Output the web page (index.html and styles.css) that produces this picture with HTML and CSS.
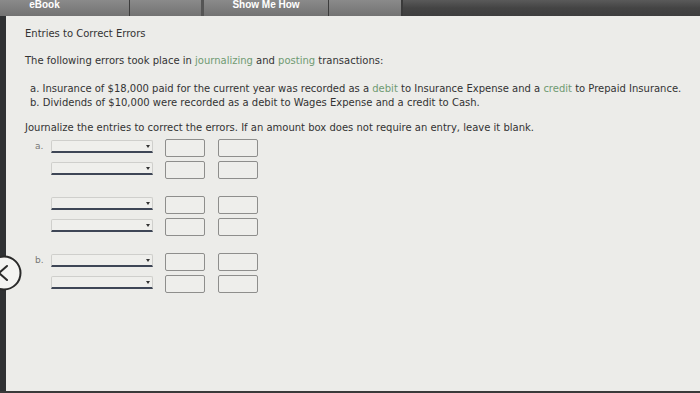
FILE: index.html
```html
<!DOCTYPE html>
<html>
<head>
<meta charset="utf-8">
<link rel="stylesheet" href="styles.css">
</head>
<body>
<div class="screen">
  <div class="topbar">
    <div class="tab tab-ebook">eBook</div>
    <div class="tab tab-blank1"></div>
    <div class="tab tab-show">Show Me How</div>
    <div class="tab tab-blank2"></div>
    <div class="darkbar"></div>
  </div>
  <div class="main">
    <div class="edge"></div>
    <div class="content">
      <div class="title">Entries to Correct Errors</div>
      <p class="intro">The following errors took place in <span class="link">journalizing</span> and <span class="link">posting</span> transactions:</p>
      <div class="items">
        <div>a. Insurance of $18,000 paid for the current year was recorded as a <span class="link">debit</span> to Insurance Expense and a <span class="link">credit</span> to Prepaid Insurance.</div>
        <div>b. Dividends of $10,000 were recorded as a debit to Wages Expense and a credit to Cash.</div>
      </div>
      <p class="instr">Journalize the entries to correct the errors. If an amount box does not require an entry, leave it blank.</p>
      <div class="journal">
        <div class="group">
          <div class="row"><span class="lbl">a.</span><span class="dd"><span class="arrow"></span></span><span class="box"></span><span class="box"></span></div>
          <div class="row"><span class="lbl"></span><span class="dd"><span class="arrow"></span></span><span class="box"></span><span class="box"></span></div>
        </div>
        <div class="group">
          <div class="row"><span class="lbl"></span><span class="dd"><span class="arrow"></span></span><span class="box"></span><span class="box"></span></div>
          <div class="row"><span class="lbl"></span><span class="dd"><span class="arrow"></span></span><span class="box"></span><span class="box"></span></div>
        </div>
        <div class="group">
          <div class="row"><span class="lbl">b.</span><span class="dd"><span class="arrow"></span></span><span class="box"></span><span class="box"></span></div>
          <div class="row"><span class="lbl"></span><span class="dd"><span class="arrow"></span></span><span class="box"></span><span class="box"></span></div>
        </div>
      </div>
    </div>
  </div>
  <div class="bottomline"></div>
  <div class="backbtn">
    <svg width="36" height="36" viewBox="0 0 36 36"><circle cx="18" cy="18" r="16.5" fill="#f4f4f2" stroke="#2a2a2a" stroke-width="2"/><path d="M21 11 L13 18 L21 25" fill="none" stroke="#2a2a2a" stroke-width="2" stroke-linecap="round" stroke-linejoin="round"/></svg>
  </div>
</div>
</body>
</html>
```
FILE: styles.css
```css
html, body {
  margin: 0;
  padding: 0;
}
body {
  background: #ebebe8;
  font-family: "DejaVu Sans", Verdana, sans-serif;
  color: #333;
}
.screen {
  position: relative;
  width: 700px;
  height: 393px;
  overflow: hidden;
  display: flex;
  flex-direction: column;
}
.topbar {
  display: flex;
  height: 16px;
  background: #4a4a4a;
  flex: none;
}
.tab {
  background: linear-gradient(#8a8a8a, #727272);
  color: #fff;
  font-family: "Liberation Sans", Arial, sans-serif;
  font-weight: bold;
  font-size: 10px;
  display: flex;
  justify-content: center;
  align-items: flex-start;
  line-height: 10px;
  border-right: 1px solid #3c3c3c;
  box-sizing: border-box;
}
.tab-ebook {
  width: 130px;
  padding-right: 40px;
}
.tab-blank1 { width: 74px; border-right: 3px solid #555; }
.tab-show { width: 125px; padding-top: 0; }
.tab-blank2 { width: 74px; border-right: 2px solid #3a3a3a; }
.darkbar {
  flex: 1;
  background: linear-gradient(#5a5a5a, #444 50%, #3e3e3e);
}
.main {
  flex: 1;
  display: flex;
}
.edge {
  width: 6px;
  background: #2f3133;
  flex: none;
}
.content {
  flex: 1;
  padding: 11px 0 0 19px;
  font-size: 10px;
  line-height: 14px;
  background: #ecece9;
}
.title {
  margin: 0;
}
.intro {
  margin: 13px 0 0 0;
}
.items {
  margin: 14px 0 0 5px;
}
.instr {
  margin: 11px 0 0 0;
}
.link {
  color: #6f9a72;
}
.journal {
  margin-top: 4px;
  display: flex;
  flex-direction: column;
  gap: 18px;
}
.group {
  display: flex;
  flex-direction: column;
  gap: 5px;
}
.row {
  display: flex;
  align-items: flex-start;
  height: 17px;
}
.lbl {
  width: 26px;
  padding-left: 10px;
  box-sizing: border-box;
  font-size: 9px;
  line-height: 12px;
  color: #777;
  padding-top: 1px;
}
.dd {
  position: relative;
  width: 102px;
  height: 13px;
  margin-top: 1px;
  box-sizing: border-box;
  border: 1px solid #cfcfcc;
  border-bottom: 2px solid #3e4656;
  border-radius: 2px 2px 0 0;
  background: #efefec;
  margin-right: 12px;
}
.arrow {
  position: absolute;
  right: 2px;
  top: 4px;
  width: 0;
  height: 0;
  border-left: 2.5px solid transparent;
  border-right: 2.5px solid transparent;
  border-top: 3px solid #333;
}
.box {
  width: 40px;
  height: 18px;
  box-sizing: border-box;
  border: 1px solid #8e8e8c;
  border-radius: 2px;
  background: #eeeeeb;
  margin-right: 13px;
}
.bottomline {
  position: absolute;
  left: 0;
  right: 0;
  bottom: 0;
  height: 2px;
  background: #3a3a3a;
}
.backbtn {
  position: absolute;
  left: -14px;
  top: 255px;
  width: 36px;
  height: 36px;
}
```
